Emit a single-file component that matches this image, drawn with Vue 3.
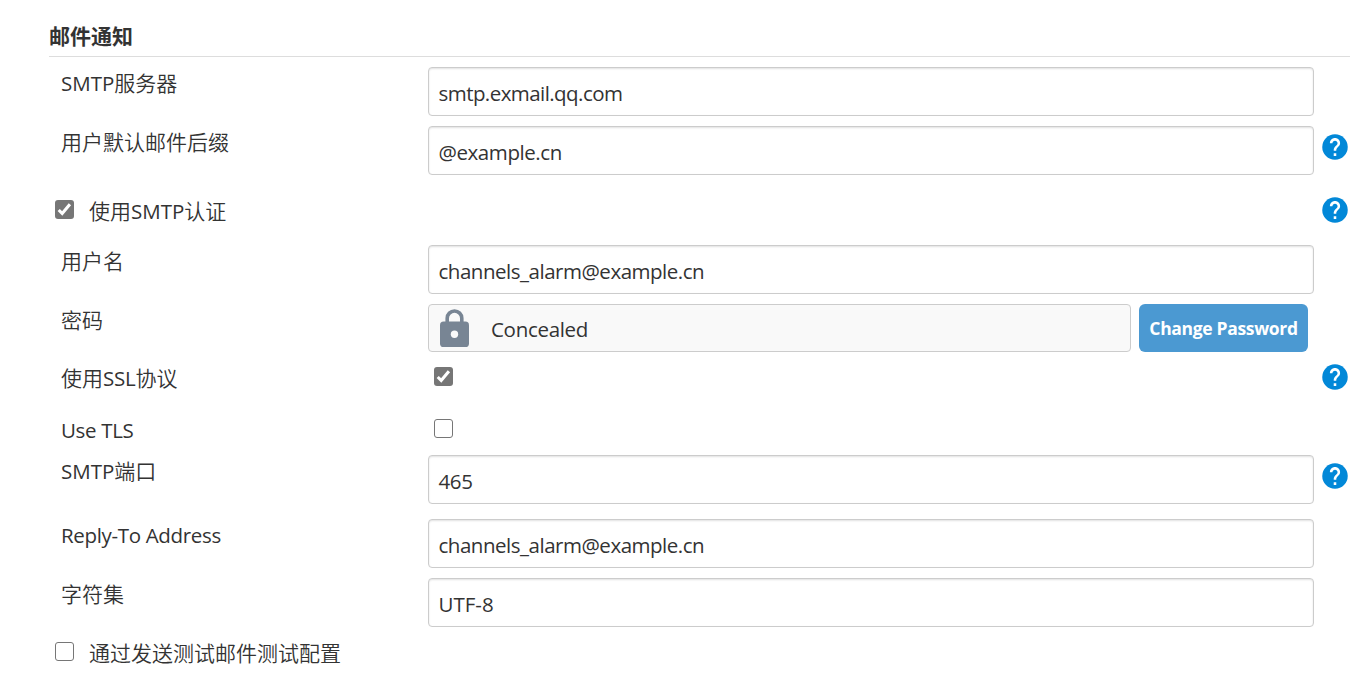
<script setup>
const rows = [
  { kind: 'text', h: 59, label: [['SMTP', 'caps'], ['服务器', 'cjk']], value: 'smtp.exmail.qq.com', track: -0.56 },
  { kind: 'text', h: 59, label: [['用户默认邮件后缀', 'cjk']], value: '@example.cn', track: -0.42, help: true },
  { kind: 'option', h: 60, label: [['使用', 'cjk'], ['SMTP', 'caps'], ['认证', 'cjk']], checked: true, help: true },
  { kind: 'text', h: 59, label: [['用户名', 'cjk']], value: 'channels_alarm@example.cn', track: -0.48 },
  { kind: 'secret', h: 58, label: [['密码', 'cjk']] },
  { kind: 'check', h: 52, label: [['使用', 'cjk'], ['SSL', 'caps'], ['协议', 'cjk']], checked: true, help: true },
  { kind: 'check', h: 41, label: [['Use TLS', 'latin']], checked: false },
  { kind: 'text', h: 64, label: [['SMTP', 'caps'], ['端口', 'cjk']], value: '465', track: -0.4, help: true },
  { kind: 'text', h: 59, label: [['Reply-To Address', 'latin']], value: 'channels_alarm@example.cn', track: -0.48 },
  { kind: 'text', h: 49, label: [['字符集', 'cjk']], value: 'UTF-8', track: 0 },
  { kind: 'option', h: 56, label: [['通过发送测试邮件测试配置', 'cjk']], checked: false }
]
</script>

<template>
  <main class="page">
    <h1 class="title">邮件通知</h1>
    <div class="rows">
      <div v-for="(r, i) in rows" :key="i" class="row" :class="r.kind" :style="{ height: r.h + 'px' }">
        <span v-if="r.kind === 'option'" class="box" :class="{ on: r.checked }">
          <svg v-if="r.checked" viewBox="0 0 19 19"><path d="M3.7 10 7.2 13.4 14.9 4.2" /></svg>
        </span>
        <label class="label"><span v-for="(s, j) in r.label" :key="j" :class="s[1]">{{ s[0] }}</span></label>
        <div v-if="r.kind === 'text'" class="field"><span :style="{ letterSpacing: r.track + 'px' }">{{ r.value }}</span></div>
        <div v-else-if="r.kind === 'secret'" class="secret-wrap">
          <div class="concealed">
            <svg class="lock" viewBox="0 0 29 38">
              <path d="M7.2 15V9.3a7.3 7.3 0 0 1 14.6 0V15" fill="none" stroke="#788594" stroke-width="3.6" />
              <rect y="12.6" width="29" height="25.4" rx="3.6" fill="#788594" />
              <circle cx="14.5" cy="25.2" r="3.7" fill="#f9f9f9" />
            </svg>
            <span>Concealed</span>
          </div>
          <button class="change">Change Password</button>
        </div>
        <div v-else-if="r.kind === 'check'" class="check-cell">
          <span class="box" :class="{ on: r.checked }">
            <svg v-if="r.checked" viewBox="0 0 19 19"><path d="M3.7 10 7.2 13.4 14.9 4.2" /></svg>
          </span>
        </div>
        <svg v-if="r.help" class="help" viewBox="1.8 1.8 20.4 20.4">
          <circle cx="12" cy="12" r="10" fill="#0288d8" />
          <path fill="#fff" d="M13 19h-2v-2h2v2zm2.07-7.75-.9.92C13.45 12.9 13 13.5 13 15h-2v-.5c0-1.1.45-2.1 1.17-2.83l1.24-1.26c.37-.36.59-.86.59-1.41 0-1.1-.9-2-2-2s-2 .9-2 2H8c0-2.21 1.79-4 4-4s4 1.79 4 4c0 .88-.36 1.68-.93 2.25z" />
        </svg>
      </div>
    </div>
  </main>
</template>

<style>
body {
  background: #fff;
}
</style>

<style scoped>
* {
  box-sizing: border-box;
}
.page {
  height: 693px;
  padding: 17px 20px 0 49px;
  overflow: hidden;
  color: #333;
  font: 20.5px/34px "Open Sans", "Noto Sans CJK SC", sans-serif;
}
.title {
  height: 40px;
  margin: 0 0 10px;
  border-bottom: 1px solid #ddd;
  font: 700 21px/36px "Noto Sans CJK SC", sans-serif;
}
.row {
  display: flex;
  align-items: flex-start;
}
.label {
  width: 379px;
  padding-left: 12px;
  white-space: nowrap;
  flex: none;
  display: flex;
  line-height: 32px;
}
.cjk {
  font-family: "Noto Sans CJK SC", sans-serif;
  font-size: 21px;
  font-weight: 350;
  line-height: 30px;
}
.latin {
  letter-spacing: -0.33px;
}
.field {
  display: flex;
  align-items: center;
  width: 886px;
  height: 49px;
  padding: 2px 9.5px 0;
  border: 1px solid #ccc;
  border-radius: 4px;
  box-shadow: inset 0 1px 2px rgba(0, 0, 0, 0.12);
}
.secret-wrap {
  display: flex;
  gap: 8px;
}
.concealed {
  display: flex;
  align-items: center;
  gap: 22px;
  width: 703px;
  height: 48px;
  padding: 0 11px;
  border: 1px solid #ccc;
  border-radius: 4px;
  background: #f9f9f9;
}
.concealed span {
  padding-top: 1px;
  letter-spacing: -0.3px;
}
.lock {
  width: 29px;
  height: 38px;
}
.change {
  width: 169px;
  height: 48px;
  padding: 0;
  border: 0;
  border-radius: 6px;
  background: #4b99d2;
  color: #fff;
  font: 700 17.5px/48px "Open Sans", sans-serif;
  letter-spacing: -0.33px;
  white-space: nowrap;
}
.box {
  display: block;
  flex: none;
  width: 19px;
  height: 19px;
  border: 1px solid #767676;
  border-radius: 3px;
  background: #fff;
}
.box.on {
  border: 0;
  background: #767676;
}
.box svg {
  display: block;
  width: 19px;
  height: 19px;
  fill: none;
  stroke: #fff;
  stroke-width: 3.1;
}
.option .box {
  margin: 15px 0 0 6px;
}
.option .label {
  width: auto;
  padding: 10px 0 0 15px;
}
.check-cell {
  width: 886px;
  padding: 5px 0 0 6px;
}
.check .caps {
  letter-spacing: -0.25px;
}
.help {
  width: 26px;
  height: 26px;
  margin: 8px 2px 0 auto;
  flex: none;
}
.check .help {
  margin-top: 2px;
}
.option .help {
  margin-top: 12px;
}
</style>
